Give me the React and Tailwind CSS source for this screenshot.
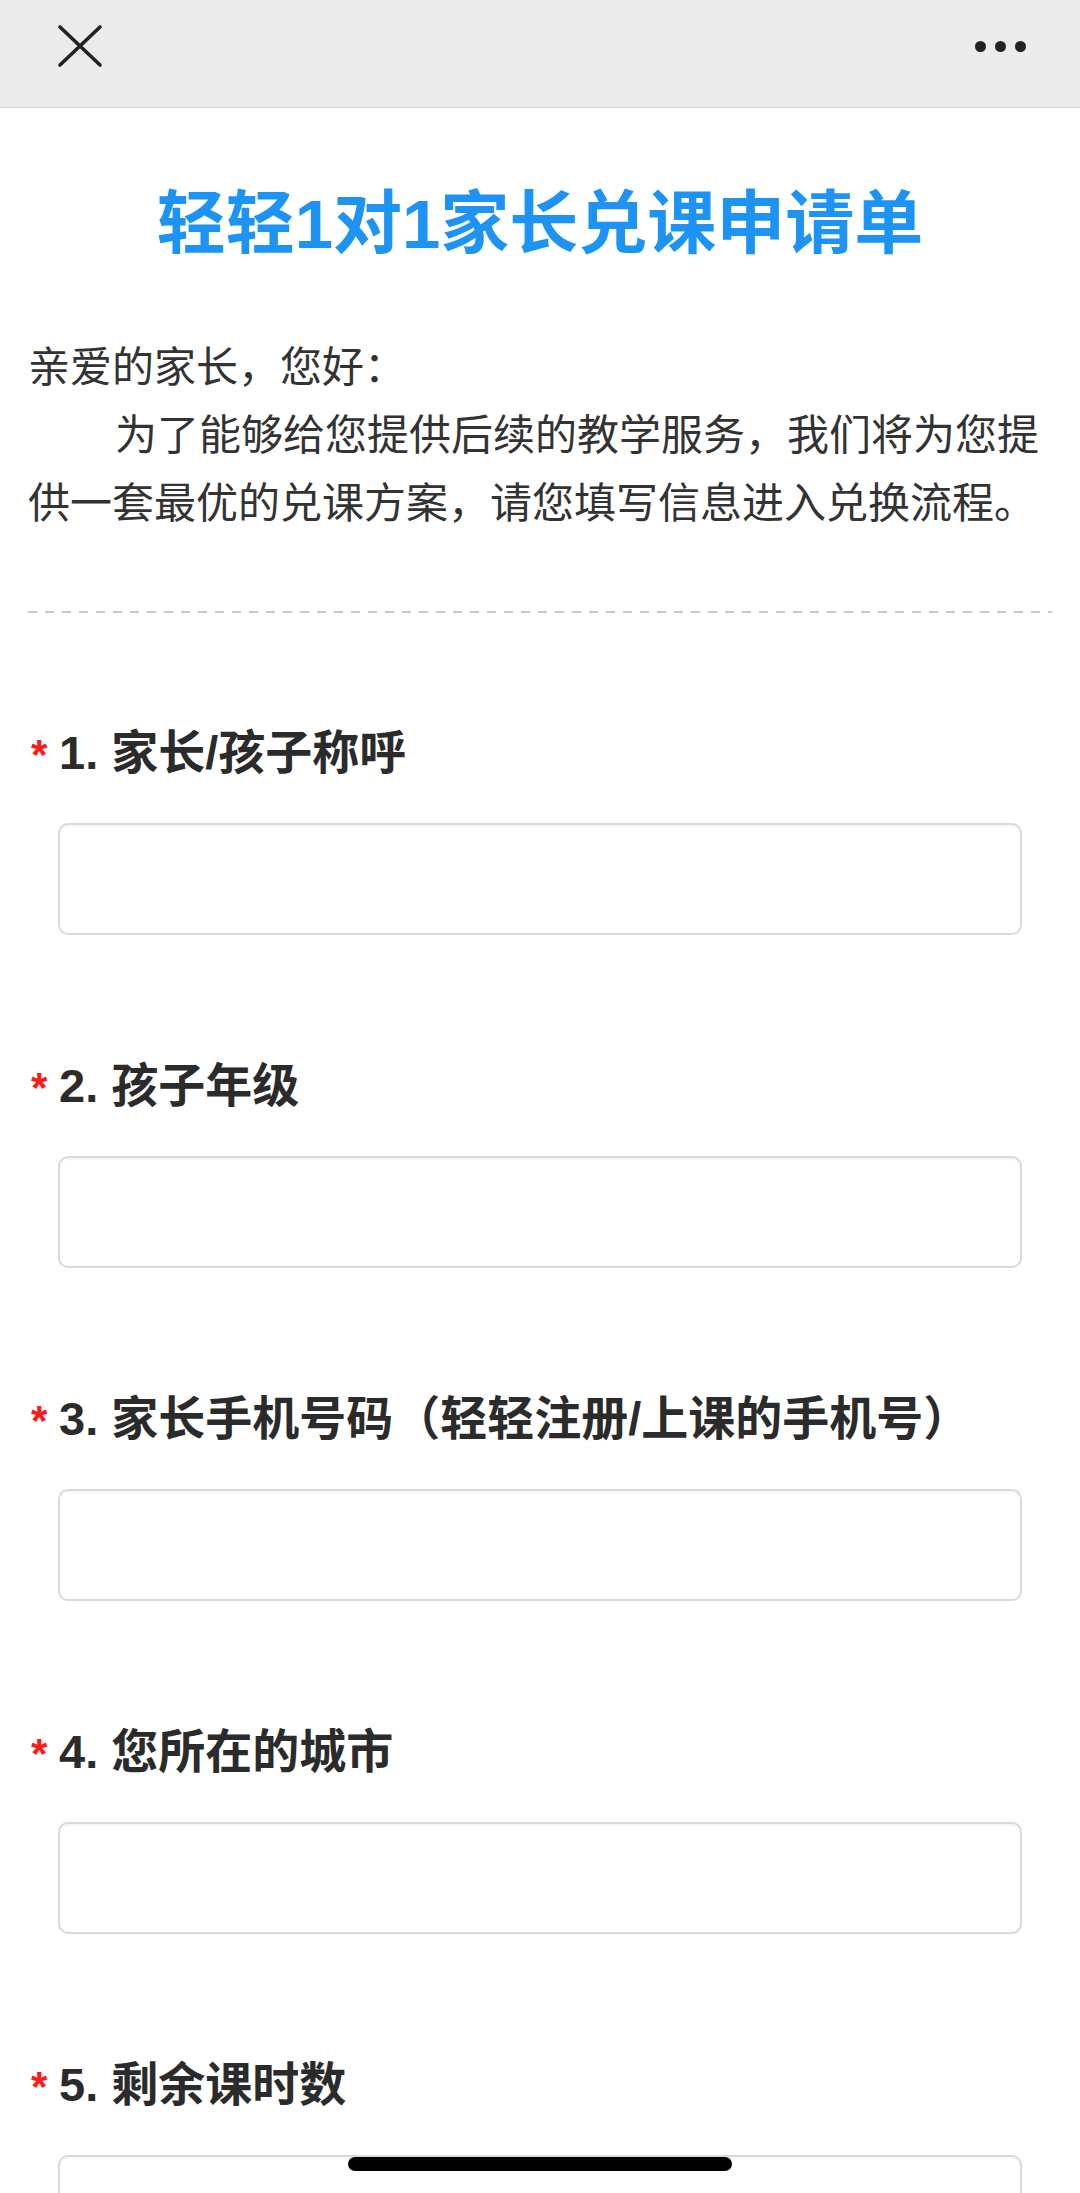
// Parent course-exchange form (WeChat in-app browser view)
import React from 'react';

const questions = [
  '1. 家长/孩子称呼',
  '2. 孩子年级',
  '3. 家长手机号码（轻轻注册/上课的手机号）',
  '4. 您所在的城市',
  '5. 剩余课时数',
];

const font = 'font-["Liberation_Sans","Noto_Sans_CJK_SC",sans-serif]';

const Question = ({ label }) => (
  <div className="pb-[121px]">
    <div className="flex items-baseline h-[60px] leading-[60px] text-[47px] font-bold text-[#2b2b2b]">
      <span className="inline-block w-[31px] pl-[3px] text-[42px] text-[#ff1a1a]">*</span>
      <span>{label}</span>
    </div>
    <div className="mt-[40px] mx-[30px] h-[112px] rounded-[10px] border-2 border-[#dadada] bg-white shadow-[inset_0_2px_2px_rgba(0,0,0,0.04)]" />
  </div>
);

export default function App() {
  return (
    <div className={`relative h-[2193px] w-[1080px] overflow-hidden bg-white ${font}`}>
      {/* top bar */}
      <div className="h-[108px] bg-[#ebebeb] border-b border-[#d9d9d9]">
        <div className="flex h-[92px] items-center justify-between pl-[58px] pr-[54px]">
          <svg width="44" height="42" viewBox="0 0 44 42" fill="none" stroke="#222" strokeWidth="3.6" strokeLinecap="round">
            <path d="M2 2 L42 40 M42 2 L2 40" />
          </svg>
          <div className="flex gap-[9px]">
            <span className="block h-[11px] w-[11px] rounded-full bg-[#222]" />
            <span className="block h-[11px] w-[11px] rounded-full bg-[#222]" />
            <span className="block h-[11px] w-[11px] rounded-full bg-[#222]" />
          </div>
        </div>
      </div>

      <div className="px-[28px]">
        <h1 className="mt-[77px] text-center text-[69px] leading-[80px] font-bold text-[#1d93f3]">
          轻轻1对1家长兑课申请单
        </h1>

        <div className="mt-[69px] text-[42px] leading-[68px] text-[#333]">
          <p>亲爱的家长，您好：</p>
          <p className="indent-[87px]">为了能够给您提供后续的教学服务，我们将为您提供一套最优的兑课方案，请您填写信息进入兑换流程。</p>
        </div>

        <div className="mt-[73px] h-[2px] bg-[linear-gradient(to_right,#c9c9c9_0_9px,transparent_9px_17px)] bg-[length:17px_2px]" />

        <div className="mt-[110px]">
          {questions.map((q) => (
            <Question key={q} label={q} />
          ))}
        </div>
      </div>

      {/* home indicator */}
      <div className="absolute bottom-[22px] left-1/2 h-[14px] w-[384px] -translate-x-1/2 rounded-full bg-black" />
    </div>
  );
}
